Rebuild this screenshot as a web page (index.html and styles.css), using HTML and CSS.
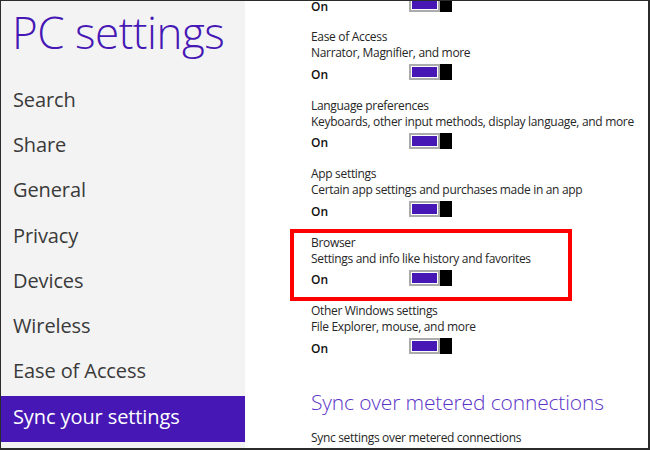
FILE: index.html
```html
<!DOCTYPE html>
<html>
<head>
<meta charset="utf-8">
<link rel="stylesheet" href="styles.css">
</head>
<body>
<div class="frame">
  <nav class="sidebar">
    <h1 class="title">PC settings</h1>
    <ul class="menu">
      <li>Search</li>
      <li>Share</li>
      <li>General</li>
      <li>Privacy</li>
      <li>Devices</li>
      <li>Wireless</li>
      <li>Ease of Access</li>
      <li class="active">Sync your settings</li>
    </ul>
  </nav>
  <main class="content">
    <div class="group first">
      <div class="row"><span class="state">On</span><span class="toggle"><span class="track"><span class="fill"></span></span><span class="thumb"></span></span></div>
    </div>
    <div class="group">
      <div class="name">Ease of Access</div>
      <div class="desc">Narrator, Magnifier, and more</div>
      <div class="row"><span class="state">On</span><span class="toggle"><span class="track"><span class="fill"></span></span><span class="thumb"></span></span></div>
    </div>
    <div class="group">
      <div class="name">Language preferences</div>
      <div class="desc">Keyboards, other input methods, display language, and more</div>
      <div class="row"><span class="state">On</span><span class="toggle"><span class="track"><span class="fill"></span></span><span class="thumb"></span></span></div>
    </div>
    <div class="group">
      <div class="name">App settings</div>
      <div class="desc">Certain app settings and purchases made in an app</div>
      <div class="row"><span class="state">On</span><span class="toggle"><span class="track"><span class="fill"></span></span><span class="thumb"></span></span></div>
    </div>
    <div class="group">
      <div class="highlight"></div>
      <div class="name">Browser</div>
      <div class="desc">Settings and info like history and favorites</div>
      <div class="row"><span class="state">On</span><span class="toggle"><span class="track"><span class="fill"></span></span><span class="thumb"></span></span></div>
    </div>
    <div class="group">
      <div class="name">Other Windows settings</div>
      <div class="desc">File Explorer, mouse, and more</div>
      <div class="row"><span class="state">On</span><span class="toggle"><span class="track"><span class="fill"></span></span><span class="thumb"></span></span></div>
    </div>
    <h2 class="section">Sync over metered connections</h2>
    <div class="desc small">Sync settings over metered connections</div>
  </main>
</div>
</body>
</html>
```
FILE: styles.css
```css
* { box-sizing: border-box; }
html, body { margin: 0; padding: 0; }
body {
  width: 650px;
  height: 450px;
  overflow: hidden;
  font-family: "Open Sans", "Noto Sans", sans-serif;
  background: #ffffff;
}
.frame {
  width: 650px;
  height: 450px;
  border-style: solid;
  border-color: #2b2b2b;
  border-width: 1px 2px 2px 1px;
  display: flex;
  overflow: hidden;
  background: #ffffff;
}
.sidebar {
  width: 244px;
  flex: none;
  background: #f3f3f3;
  display: flex;
  flex-direction: column;
}
.title {
  margin: 0;
  padding: 4px 0 0 11px;
  height: 79px;
  font-size: 44px;
  font-weight: 300;
  line-height: 54px;
  color: #4617b5;
  letter-spacing: -0.5px;
}
.menu {
  list-style: none;
  margin: 0;
  padding: 0;
}
.menu li {
  height: 45.2px;
  line-height: 40px;
  padding-left: 12px;
  font-size: 20px;
  font-weight: 400;
  color: #3a3a3a;
  letter-spacing: -0.1px;
}
.menu li.active {
  background: #4617b5;
  color: #ffffff;
  line-height: 42px;
}
.content {
  flex: 1;
  padding-left: 66px;
  padding-top: 28px;
  overflow: hidden;
}
.group {
  position: relative;
  height: 68.6px;
}
.group.first {
  height: 0;
}
.group.first .row {
  position: relative;
  top: -33px;
  margin: 0;
}
.name, .desc {
  font-size: 12px;
  line-height: 16px;
  color: #262626;
  white-space: nowrap;
  letter-spacing: -0.32px;
}
.row {
  display: flex;
  align-items: center;
  margin-top: 3px;
  height: 16px;
}
.state {
  width: 98px;
  font-size: 12px;
  font-weight: 600;
  color: #111;
  position: relative;
  top: 2px;
}
.toggle {
  display: flex;
  width: 43px;
  height: 16px;
}
.track {
  flex: 1;
  border: 2px solid #ababab;
  padding: 1px;
  background: #ffffff;
  display: flex;
}
.fill {
  flex: 1;
  background: #4617b5;
}
.thumb {
  width: 12px;
  background: #000000;
}
.highlight {
  position: absolute;
  left: -21px;
  top: -6px;
  width: 282px;
  height: 72px;
  border: 4px solid #ff0000;
}
.section {
  margin: 0;
  padding-top: 16px;
  font-size: 21px;
  font-weight: 300;
  line-height: 28px;
  color: #5b35c8;
  white-space: nowrap;
  letter-spacing: -0.15px;
}
.desc.small {
  margin-top: 14px;
}
```
